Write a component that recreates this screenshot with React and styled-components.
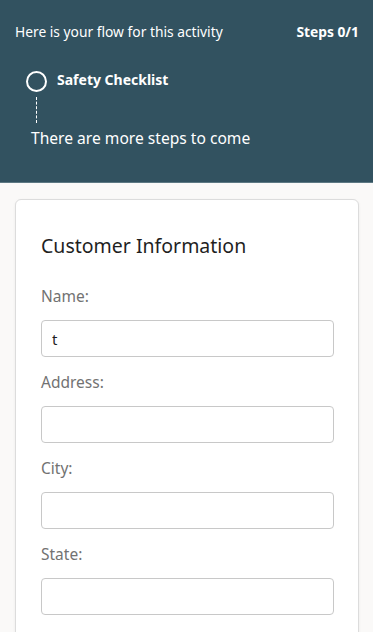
import React, { useState } from 'react';
import styled, { createGlobalStyle } from 'styled-components';

const GlobalStyle = createGlobalStyle`
    body {
        margin: 0;
        background: #faf9f8;
        font-family: "Noto Sans", "Open Sans", sans-serif;
    }
`;

const fields = ['Name', 'Address', 'City', 'State'];

const App = () => {

    const [values, setValues] = useState({ Name: 't' });

    const changeHandler = (name) => (e) => setValues({ ...values, [name]: e.target.value });

    return (
        <>
            <GlobalStyle />
            <Header>
                <TopRow>
                    <span>Here is your flow for this activity</span>
                    <Steps>Steps 0/1</Steps>
                </TopRow>
                <StepRow>
                    <StepDot />
                    <StepTitle>Safety Checklist</StepTitle>
                </StepRow>
                <Dashes />
                <More>There are more steps to come</More>
            </Header>
            <Body>
                <Card>
                    <Title>Customer Information</Title>
                    {fields.map((f) => (
                        <Field key={f}>
                            <Label>{f}:</Label>
                            <Input value={values[f] || ''} onChange={changeHandler(f)} />
                        </Field>
                    ))}
                </Card>
            </Body>
        </>
    )
}

export default App;


const Header = styled.div`
    background: #325260;
    color: #fff;
    height: 183px;
    box-sizing: border-box;
    padding: 22px 14px 0 15px;
    border-bottom: 1px solid #5d7883;
`;

const TopRow = styled.div`
    display: flex;
    justify-content: space-between;
    align-items: center;
    font-size: 13.8px;
    line-height: 20px;
`;

const Steps = styled.span`
    font-weight: 700;
`;

const StepRow = styled.div`
    display: flex;
    align-items: center;
    margin-top: 29px;
    padding-left: 11px;
`;

const StepDot = styled.div`
    width: 17px;
    height: 17px;
    border: 2px solid #fff;
    border-radius: 50%;
`;

const StepTitle = styled.span`
    margin-left: 10px;
    margin-top: -4px;
    font-size: 14px;
    font-weight: 700;
`;

const Dashes = styled.div`
    width: 0;
    height: 26px;
    margin: 5px 0 0 21px;
    border-left: 1px dashed #fff;
`;

const More = styled.div`
    margin: 4px 0 0 16px;
    font-size: 15.6px;
    line-height: 22px;
`;

const Body = styled.div`
    padding: 16px 14px 0 15px;
`;

const Card = styled.div`
    background: #fff;
    border: 1px solid #dcdcdc;
    border-radius: 6px;
    box-shadow: 0 1px 3px rgba(0, 0, 0, 0.06);
    padding: 32px 24px 40px 25px;
`;

const Title = styled.h2`
    margin: 0 0 25px;
    font-size: 19.5px;
    font-weight: 400;
    line-height: 28px;
    color: #1f1f1f;
`;

const Field = styled.div`
    margin-bottom: 14px;
`;

const Label = styled.div`
    font-size: 15.5px;
    line-height: 22px;
    color: #727272;
    margin-bottom: 13px;
`;

const Input = styled.input`
    display: block;
    width: 100%;
    box-sizing: border-box;
    height: 37px;
    border: 1px solid #c8c8c8;
    border-radius: 4px;
    padding: 0 10px;
    font-family: inherit;
    font-size: 15px;
    color: #1f1f1f;
    outline: none;
`;
